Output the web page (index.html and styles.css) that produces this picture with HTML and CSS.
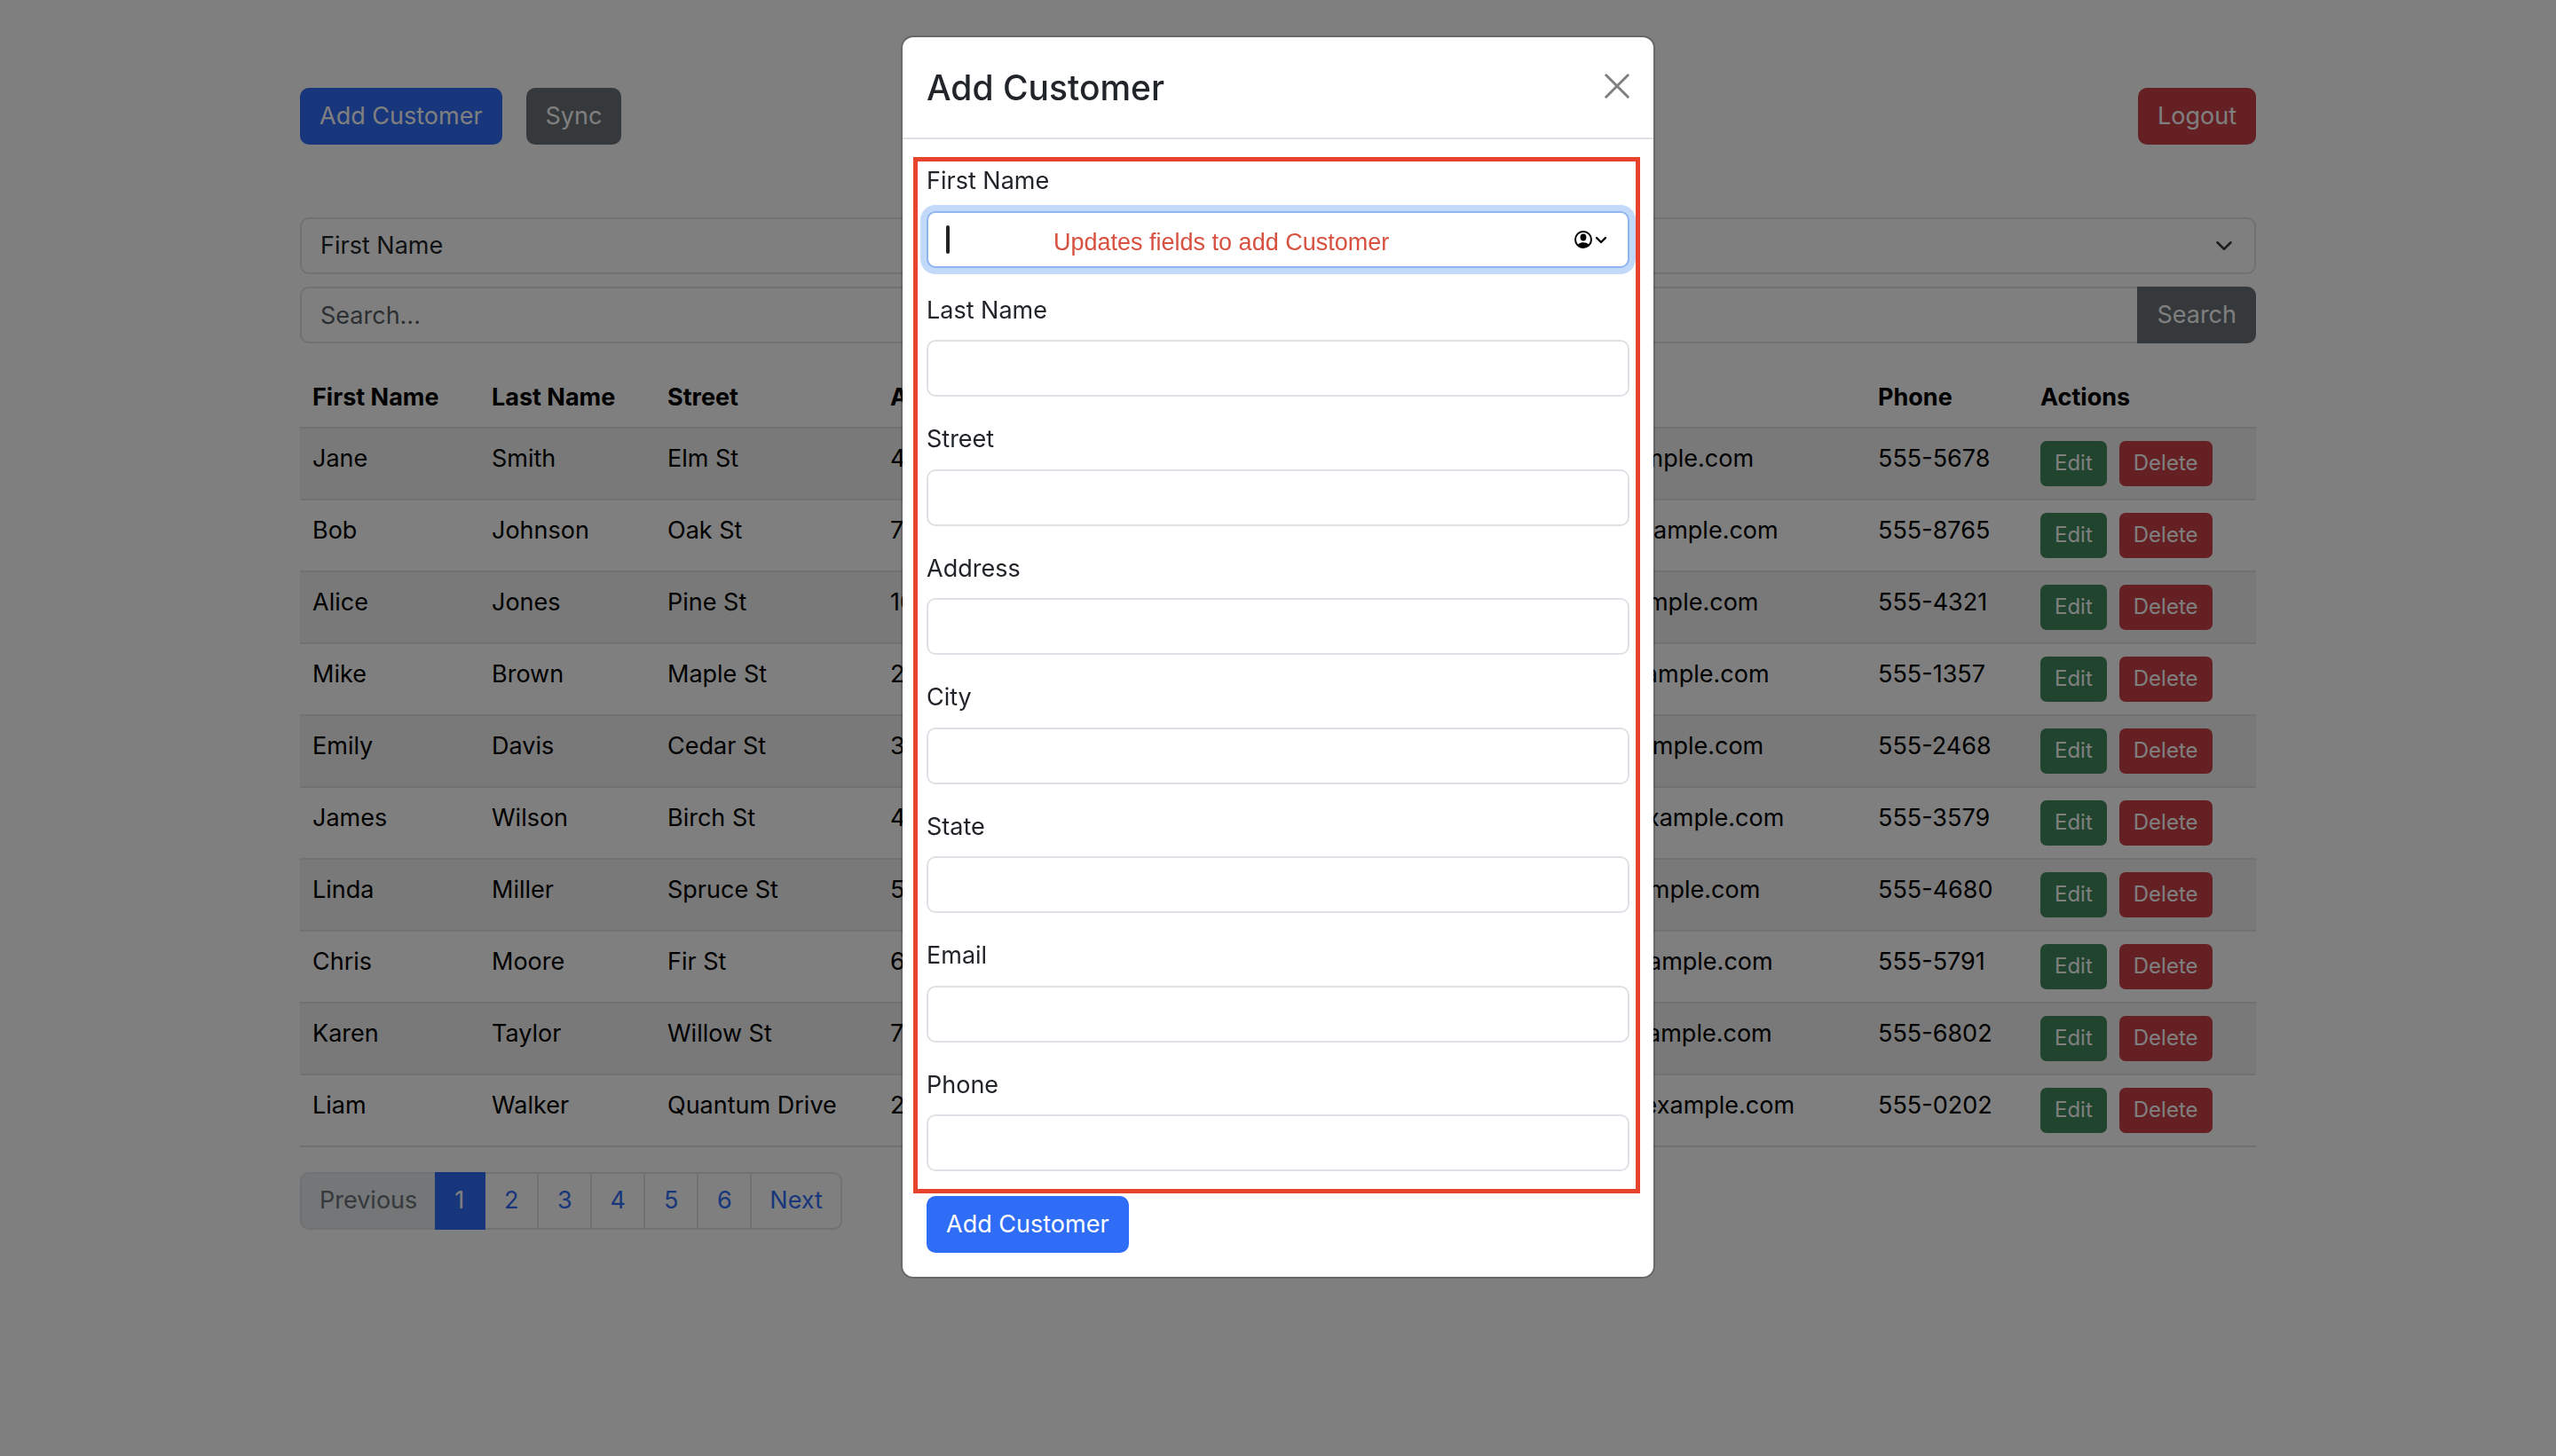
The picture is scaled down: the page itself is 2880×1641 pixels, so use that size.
FILE: index.html
```html
<!DOCTYPE html>
<html lang="en">
<head>
<meta charset="utf-8">
<meta name="viewport" content="width=device-width, initial-scale=1">
<title>Customers</title>
<link rel="stylesheet" href="styles.css">
</head>
<body>
<main class="container">
  <header class="topbar">
    <button type="button" class="btn btn-primary">Add Customer</button>
    <button type="button" class="btn btn-secondary">Sync</button>
    <button type="button" class="btn btn-danger topbar-end">Logout</button>
  </header>

  <form class="filters">
    <div class="select-wrap">
      <select class="control" aria-label="Search field">
        <option>First Name</option>
        <option>Last Name</option>
        <option>City</option>
        <option>Email</option>
      </select>
      <svg class="select-arrow" viewBox="0 0 16 16" aria-hidden="true"><path d="m2 5 6 6 6-6" fill="none" stroke="#343a40" stroke-width="2" stroke-linecap="round" stroke-linejoin="round"/></svg>
    </div>
    <div class="search-group">
      <input class="control" type="search" placeholder="Search..." aria-label="Search">
      <button type="button" class="btn btn-secondary">Search</button>
    </div>
  </form>

  <table class="customers">
    <colgroup>
      <col class="c-first"><col class="c-last"><col class="c-street"><col class="c-address"><col class="c-city"><col class="c-state"><col class="c-email"><col class="c-phone"><col>
    </colgroup>
    <thead>
      <tr><th>First Name</th><th>Last Name</th><th>Street</th><th>Address</th><th>City</th><th>State</th><th>Email</th><th>Phone</th><th>Actions</th></tr>
    </thead>
    <tbody>
      <tr><td>Jane</td><td>Smith</td><td>Elm St</td><td>45</td><td>Othertown</td><td>TX</td><td>jane.smith@example.com</td><td>555-5678</td><td><div class="actions"><button type="button" class="btn btn-sm btn-success">Edit</button><button type="button" class="btn btn-sm btn-danger">Delete</button></div></td></tr>
      <tr><td>Bob</td><td>Johnson</td><td>Oak St</td><td>78</td><td>Sometown</td><td>FL</td><td>bob.johnson@example.com</td><td>555-8765</td><td><div class="actions"><button type="button" class="btn btn-sm btn-success">Edit</button><button type="button" class="btn btn-sm btn-danger">Delete</button></div></td></tr>
      <tr><td>Alice</td><td>Jones</td><td>Pine St</td><td>10</td><td>Newtown</td><td>NY</td><td>alice.jones@example.com</td><td>555-4321</td><td><div class="actions"><button type="button" class="btn btn-sm btn-success">Edit</button><button type="button" class="btn btn-sm btn-danger">Delete</button></div></td></tr>
      <tr><td>Mike</td><td>Brown</td><td>Maple St</td><td>20</td><td>Oldtown</td><td>WA</td><td>mike.brown@example.com</td><td>555-1357</td><td><div class="actions"><button type="button" class="btn btn-sm btn-success">Edit</button><button type="button" class="btn btn-sm btn-danger">Delete</button></div></td></tr>
      <tr><td>Emily</td><td>Davis</td><td>Cedar St</td><td>30</td><td>Smalltown</td><td>OR</td><td>emily.davis@example.com</td><td>555-2468</td><td><div class="actions"><button type="button" class="btn btn-sm btn-success">Edit</button><button type="button" class="btn btn-sm btn-danger">Delete</button></div></td></tr>
      <tr><td>James</td><td>Wilson</td><td>Birch St</td><td>40</td><td>Bigtown</td><td>NV</td><td>james.wilson@example.com</td><td>555-3579</td><td><div class="actions"><button type="button" class="btn btn-sm btn-success">Edit</button><button type="button" class="btn btn-sm btn-danger">Delete</button></div></td></tr>
      <tr><td>Linda</td><td>Miller</td><td>Spruce St</td><td>50</td><td>Laketown</td><td>MI</td><td>linda.miller@example.com</td><td>555-4680</td><td><div class="actions"><button type="button" class="btn btn-sm btn-success">Edit</button><button type="button" class="btn btn-sm btn-danger">Delete</button></div></td></tr>
      <tr><td>Chris</td><td>Moore</td><td>Fir St</td><td>60</td><td>Hilltown</td><td>CO</td><td>chris.moore@example.com</td><td>555-5791</td><td><div class="actions"><button type="button" class="btn btn-sm btn-success">Edit</button><button type="button" class="btn btn-sm btn-danger">Delete</button></div></td></tr>
      <tr><td>Karen</td><td>Taylor</td><td>Willow St</td><td>70</td><td>Rivertown</td><td>AZ</td><td>karen.taylor@example.com</td><td>555-6802</td><td><div class="actions"><button type="button" class="btn btn-sm btn-success">Edit</button><button type="button" class="btn btn-sm btn-danger">Delete</button></div></td></tr>
      <tr><td>Liam</td><td>Walker</td><td>Quantum Drive</td><td>20</td><td>Techville</td><td>CA</td><td>liam.walker22@example.com</td><td>555-0202</td><td><div class="actions"><button type="button" class="btn btn-sm btn-success">Edit</button><button type="button" class="btn btn-sm btn-danger">Delete</button></div></td></tr>
    </tbody>
  </table>

  <nav aria-label="Pages">
    <ul class="pagination">
      <li><a class="page disabled" href="#">Previous</a></li>
      <li><a class="page active" href="#">1</a></li>
      <li><a class="page" href="#">2</a></li>
      <li><a class="page" href="#">3</a></li>
      <li><a class="page" href="#">4</a></li>
      <li><a class="page" href="#">5</a></li>
      <li><a class="page" href="#">6</a></li>
      <li><a class="page" href="#">Next</a></li>
    </ul>
  </nav>
</main>

<div class="backdrop">
  <div class="modal" role="dialog" aria-modal="true" aria-labelledby="modal-title">
    <div class="modal-header">
      <h2 id="modal-title" class="modal-title">Add Customer</h2>
      <button type="button" class="close" aria-label="Close"><svg viewBox="0 0 16 16" aria-hidden="true"><path d="M1 1 15 15M15 1 1 15" fill="none" stroke="currentColor" stroke-width="1.7" stroke-linecap="round"/></svg></button>
    </div>
    <form class="modal-body">
      <div class="fields">
        <div class="field">
          <label for="first">First Name</label>
          <div class="focus-wrap">
            <input class="control focused" id="first" type="text">
            <span class="caret"></span>
            <span class="note">Updates fields to add Customer</span>
            <svg class="autofill" viewBox="0 0 38 22" aria-hidden="true">
              <circle cx="11" cy="11" r="9" fill="none" stroke="#000" stroke-width="2"/>
              <ellipse cx="11" cy="8.5" rx="3.4" ry="4" fill="#000"/>
              <path d="M4.500 17.200C6 14.800 8.500 14.200 11 14.200s5 .6 6.500 3C15.800 19.200 13.500 20 11 20s-4.800-.8-6.500-2.800z" fill="#000"/>
              <path d="m26 9 5 5 5-5" fill="none" stroke="#000" stroke-width="2.400" stroke-linecap="round" stroke-linejoin="round"/>
            </svg>
          </div>
        </div>
        <div class="field"><label for="last">Last Name</label><input class="control" id="last" type="text"></div>
        <div class="field"><label for="street">Street</label><input class="control" id="street" type="text"></div>
        <div class="field"><label for="address">Address</label><input class="control" id="address" type="text"></div>
        <div class="field"><label for="city">City</label><input class="control" id="city" type="text"></div>
        <div class="field"><label for="state">State</label><input class="control" id="state" type="text"></div>
        <div class="field"><label for="email">Email</label><input class="control" id="email" type="email"></div>
        <div class="field"><label for="phone">Phone</label><input class="control" id="phone" type="tel"></div>
      </div>
      <button type="button" class="btn btn-primary">Add Customer</button>
    </form>
  </div>
</div>
</body>
</html>
```
FILE: styles.css
```css
*, *::before, *::after { box-sizing: border-box; }

body {
  margin: 0;
  background: #fff;
  color: #212529;
  font-family: Inter, "Liberation Sans", sans-serif;
  font-size: 27px;
  line-height: 1.5;
}

.container {
  max-width: 2204px;
  margin: 0 auto;
  padding-top: 99px;
}

/* Buttons */
.btn {
  height: 64px;
  padding: 0 22px;
  border: 0;
  border-radius: 10px;
  color: #fff;
  font: inherit;
  white-space: nowrap;
}
.btn-primary { background: #306df6; }
.btn-secondary { background: #6b7277; }
.btn-danger { background: #ca4148; }
.btn-success { background: #40885a; }
.btn-sm {
  height: 51px;
  padding: 0 16px;
  border-radius: 7px;
  font-size: 24px;
}

.topbar {
  display: flex;
  gap: 27px;
  margin-bottom: 82px;
}
.topbar-end { margin-left: auto; }

/* Form controls */
.control {
  display: block;
  width: 100%;
  height: 64px;
  padding: 0 21px;
  border: 2px solid #dee2e6;
  border-radius: 10px;
  outline: 0;
  background: #fff;
  color: #212529;
  font: inherit;
  appearance: none;
}
.control::placeholder { color: #595f64; }

.filters {
  display: grid;
  gap: 14px;
  margin-bottom: 27px;
}
.select-wrap { position: relative; }
.select-arrow {
  position: absolute;
  top: 22px;
  right: 26px;
  width: 20px;
  height: 20px;
}
.search-group { display: flex; }
.search-group .control {
  flex: 1;
  border-right: 0;
  border-radius: 10px 0 0 10px;
}
.search-group .btn { border-radius: 0 10px 10px 0; }

/* Customers table */
.customers {
  width: 100%;
  margin-bottom: 28px;
  border-spacing: 0;
  table-layout: fixed;
  color: #000;
}
.c-first { width: 202px; }
.c-last { width: 198px; }
.c-street { width: 251px; }
.c-address { width: 240px; }
.c-city { width: 250px; }
.c-state { width: 156px; }
.c-email { width: 467px; }
.c-phone { width: 183px; }
.customers th,
.customers td {
  padding: 14px;
  border-bottom: 2px solid #dee2e6;
  text-align: left;
  vertical-align: top;
  white-space: nowrap;
}
.customers th {
  padding-bottom: 12px;
  font-weight: 700;
}
.customers tbody tr:nth-child(odd) { background: #f2f2f2; }
.actions {
  display: flex;
  gap: 14px;
}

/* Pagination */
.pagination {
  display: flex;
  margin: 0;
  padding: 0;
  list-style: none;
}
.page {
  display: flex;
  align-items: center;
  justify-content: center;
  min-width: 60px;
  height: 65px;
  border: 2px solid #dee2e6;
  border-left-width: 0;
  color: #306df6;
  text-decoration: none;
}
.pagination li:first-child .page {
  border-left-width: 2px;
  border-radius: 10px 0 0 10px;
}
.pagination li:last-child .page {
  padding: 0 20px;
  border-radius: 0 10px 10px 0;
}
.page.disabled {
  padding: 0 20px;
  border-right-width: 0;
  background: #e9ecef;
  color: #6b7277;
}
.page.active {
  min-width: 57px;
  border-color: #306df6;
  background: #306df6;
  color: #fff;
}

/* Modal */
.backdrop {
  position: fixed;
  inset: 0;
  display: flex;
  align-items: flex-start;
  justify-content: center;
  padding-top: 40px;
  overflow: auto;
  background: rgba(0, 0, 0, .5);
}
.modal {
  width: 100%;
  max-width: 850px;
  border: 2px solid rgba(0, 0, 0, .18);
  border-radius: 14px;
  background: #fff;
  background-clip: padding-box;
}
.modal-header {
  display: flex;
  align-items: center;
  justify-content: space-between;
  height: 115px;
  padding: 0 27px;
  border-bottom: 2px solid #dee2e6;
}
.modal-title {
  margin: 0;
  font-size: 39px;
  font-weight: 500;
  line-height: 60px;
}
.close {
  display: flex;
  padding: 0 0 4px;
  border: 0;
  background: none;
  color: #7f7f7f;
}
.close svg {
  width: 28px;
  height: 28px;
}
.modal-body { padding: 27px; }
.fields { position: relative; }
.fields::after {
  content: "";
  position: absolute;
  inset: -7px -12px 3px -15px;
  border: 5px solid #e8432c;
  pointer-events: none;
}
.field { padding-bottom: 28px; }
.field label {
  display: block;
  margin-bottom: 13px;
}
.focus-wrap { position: relative; }
.focused {
  border-color: #8fb4ee;
  box-shadow: 0 0 0 7px #c3d9fa;
}
.caret {
  position: absolute;
  top: 16px;
  left: 22px;
  width: 4px;
  height: 32px;
  border-radius: 2px;
  background: #212121;
}
.note {
  position: absolute;
  top: 15px;
  left: 143px;
  color: #d8503f;
  font-family: "Liberation Sans", Arial, sans-serif;
}
.autofill {
  position: absolute;
  top: 21px;
  right: 25px;
  width: 38px;
  height: 22px;
}
```
